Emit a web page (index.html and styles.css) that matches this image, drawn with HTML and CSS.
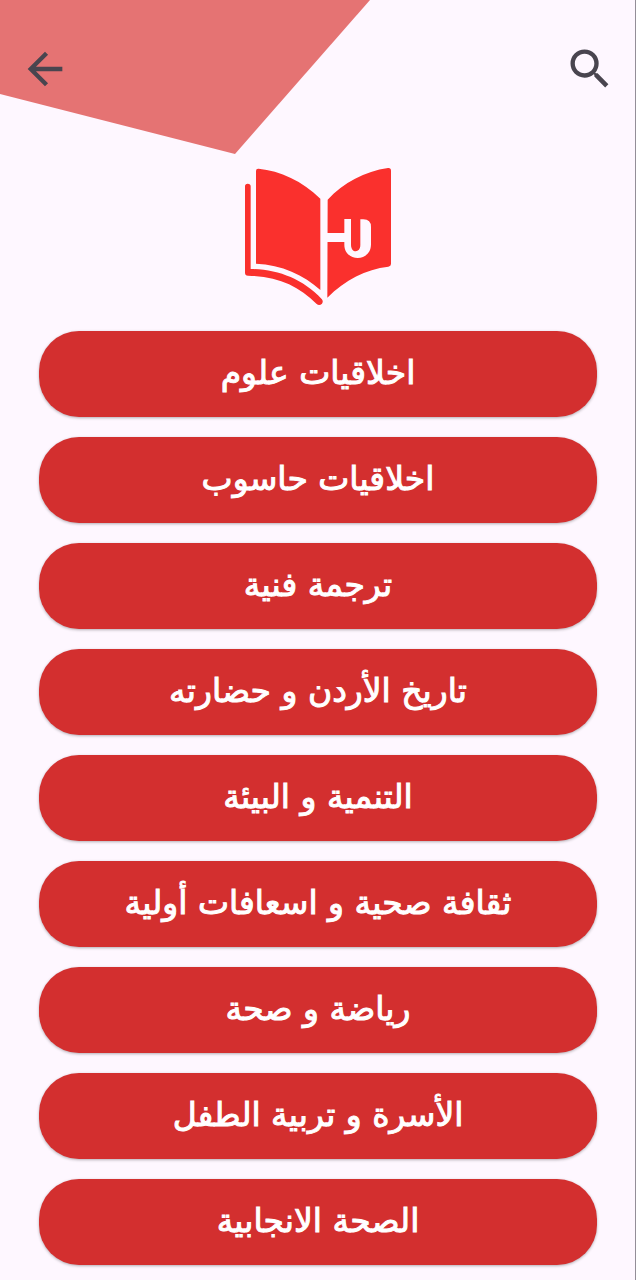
FILE: index.html
```html
<!DOCTYPE html>
<html lang="ar">
<head>
<meta charset="utf-8">
<meta name="viewport" content="width=device-width, initial-scale=1">
<title>المواد</title>
<link rel="stylesheet" href="styles.css">
</head>
<body>
<div class="screen">
  <svg class="corner" width="370" height="154" viewBox="0 0 370 154" aria-hidden="true"><path d="M0 0H370L235 154L0 94Z" fill="#e57373"/></svg>
  <header class="toolbar">
    <button class="icon-button" type="button" aria-label="رجوع">
      <svg viewBox="0 0 24 24" aria-hidden="true"><path d="M20 11H7.83l5.59-5.59L12 4l-8 8 8 8 1.41-1.41L7.83 13H20v-2z"/></svg>
    </button>
    <button class="icon-button" type="button" aria-label="بحث">
      <svg viewBox="0 0 24 24" aria-hidden="true"><path d="M15.5 14h-.79l-.28-.27A6.471 6.471 0 0 0 16 9.5 6.5 6.5 0 1 0 9.5 16c1.61 0 3.09-.59 4.23-1.57l.27.28v.79l5 4.99L20.49 19l-4.99-5zm-6 0C7.01 14 5 11.99 5 9.5S7.01 5 9.5 5 14 7.01 14 9.5 11.99 14 9.5 14z"/></svg>
    </button>
  </header>
  <main>
    <svg class="logo" viewBox="-6 0 540 480" role="img" aria-label="كتاب">
      <g fill="#fa302d">
        <path d="M78 48Q78 40 86 41C150 47 218 78 271 131V405C222 360 155 329 78 326Z"/>
        <path d="M293 134C340 83 405 49 474 39Q483 38 483 47V327Q483 334 475 335C407 343 346 374 292 428Z"/>
        <path d="M45 94Q45 86 53 86Q62 86 62 94V342C145 344 217 371 275 432Q281 439 276 446Q268 453 260 447C205 392 145 364 54 362Q45 362 45 353Z"/>
      </g>
      <path d="M291 234H343V192H363V269C363 295 391 295 391 270V193H400Q423 193 423 216V268C423 323 343 321 343 269V261H291Z" fill="#fef7ff"/>
    </svg>
    <nav class="courses" dir="rtl">
      <button class="course" type="button">اخلاقيات علوم</button>
      <button class="course" type="button">اخلاقيات حاسوب</button>
      <button class="course" type="button">ترجمة فنية</button>
      <button class="course" type="button">تاريخ الأردن و حضارته</button>
      <button class="course" type="button">التنمية و البيئة</button>
      <button class="course" type="button">ثقافة صحية و اسعافات أولية</button>
      <button class="course" type="button">رياضة و صحة</button>
      <button class="course" type="button">الأسرة و تربية الطفل</button>
      <button class="course" type="button">الصحة الانجابية</button>
    </nav>
  </main>
</div>
</body>
</html>
```
FILE: styles.css
```css
* { box-sizing: border-box; }
body {
  margin: 0;
  background: #fef7ff;
  font-family: "DejaVu Sans", sans-serif;
}
.screen {
  position: relative;
  min-height: 100vh;
  padding-bottom: 12px;
  border-right: 1px solid #938e98;
}
.corner {
  position: absolute;
  top: 0;
  left: 0;
}
.toolbar {
  position: relative;
  display: flex;
  justify-content: space-between;
  padding: 43px 19px 0;
}
.icon-button {
  width: 52px;
  height: 52px;
  padding: 0;
  border: 0;
  background: none;
}
.icon-button svg {
  display: block;
  width: 100%;
  fill: #49454f;
}
.logo {
  display: block;
  width: 180px;
  margin: 60px auto 16px;
}
.courses {
  display: flex;
  flex-direction: column;
  gap: 20px;
  padding: 0 38px 0 39px;
}
.course {
  min-height: 86px;
  padding: 0 24px 2px;
  border: 0;
  border-radius: 40px;
  background: #d32f2f;
  box-shadow: 0 1px 3px rgba(0, 0, 0, 0.3);
  color: #fff;
  font: 33px/40px "DejaVu Sans", sans-serif;
  -webkit-text-stroke: 1px #fff;
}
```
